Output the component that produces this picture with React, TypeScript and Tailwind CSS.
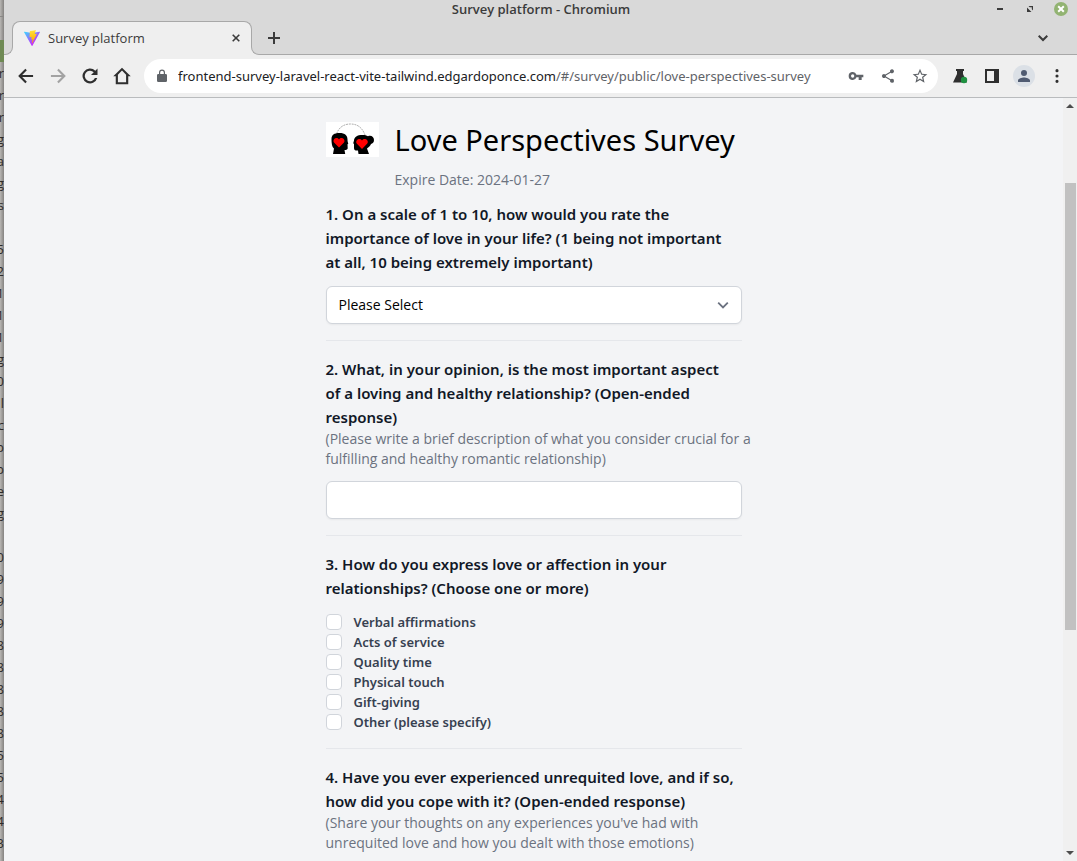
import React from "react";

const sliverRows = [
  "", "r", "r", "r", "g", "a", "g", "s", "", "5", "2", "1", "1", "1", "g", "0", "l", "c", "p",
  "p", "e", "g", "", "0", "9", "9", "9", "8", "8", "8", "8", "8", "5", "5", "4", "4", "3",
];

const expressions = [
  "Verbal affirmations",
  "Acts of service",
  "Quality time",
  "Physical touch",
  "Gift-giving",
  "Other (please specify)",
];

function Lines({ lines }: { lines: string[] }) {
  return (
    <>
      {lines.map((line, i) => (
        <span key={line} className="block whitespace-nowrap">
          {line}
          {i < lines.length - 1 ? " " : ""}
        </span>
      ))}
    </>
  );
}

function BackgroundWindow() {
  return (
    <div aria-hidden="true" className="flex w-1 shrink-0 flex-col overflow-hidden bg-linear-to-r from-[#b9b7b4] to-[#858381] text-[13px] leading-[22px] text-[#2f2b29]">
      <div className="h-[17px] shrink-0 border-b border-[#8a8886]" />
      <div className="h-[23px] shrink-0" />
      {sliverRows.map((row, i) => (
        <div key={i} className={i === 0 ? "h-[22px] shrink-0 bg-[#6f8a54]" : "flex h-[22px] shrink-0 justify-end"}>
          {row}
        </div>
      ))}
    </div>
  );
}

function ViteLogo() {
  return (
    <svg viewBox="0 0 256 257" className="size-4 shrink-0" aria-hidden="true">
      <defs>
        <linearGradient id="viteBody" x1="-.8%" x2="57.6%" y1="7.7%" y2="78.4%">
          <stop offset="0%" stopColor="#41D1FF" />
          <stop offset="100%" stopColor="#BD34FE" />
        </linearGradient>
        <linearGradient id="viteBolt" x1="43.4%" x2="50.3%" y1="2.2%" y2="89%">
          <stop offset="0%" stopColor="#FFEA83" />
          <stop offset="8.3%" stopColor="#FFDD35" />
          <stop offset="100%" stopColor="#FFA800" />
        </linearGradient>
      </defs>
      <path fill="url(#viteBody)" d="M255.153 37.938 134.897 252.976c-2.483 4.44-8.862 4.466-11.382.048L.875 37.958c-2.746-4.814 1.371-10.646 6.827-9.67l120.385 21.517a6.537 6.537 0 0 0 2.322-.004l117.867-21.483c5.438-.991 9.574 4.796 6.877 9.62Z" />
      <path fill="url(#viteBolt)" d="M185.432.063 96.44 17.501a3.268 3.268 0 0 0-2.634 3.014l-5.474 92.456a3.268 3.268 0 0 0 3.997 3.378l24.777-5.718c2.318-.535 4.413 1.507 3.936 3.838l-7.361 36.047c-.495 2.426 1.782 4.5 4.151 3.78l15.304-4.649c2.372-.72 4.652 1.36 4.15 3.788l-11.698 56.621c-.732 3.542 3.979 5.473 5.943 2.437l1.313-2.028 72.516-144.72c1.215-2.423-.88-5.186-3.54-4.672l-25.505 4.922c-2.396.462-4.435-1.77-3.759-4.114l16.646-57.705c.677-2.35-1.37-4.583-3.769-4.113Z" />
    </svg>
  );
}

function Icon({ d, className }: { d: string; className: string }) {
  return (
    <svg viewBox="0 0 24 24" fill="currentColor" className={className} aria-hidden="true">
      <path d={d} />
    </svg>
  );
}

function TitleBar() {
  return (
    <div className="flex h-[21px] items-center bg-[#d9d9d9] pr-[9px] pb-[3px] text-[#3b3b3b]">
      <div className="w-[84px] shrink-0" />
      <div className="flex-1 text-center text-[13px] leading-[18px] font-semibold">Survey platform - Chromium</div>
      <div className="flex shrink-0 items-center gap-4">
        <button aria-label="Minimize" className="flex size-3 items-center justify-center">
          <span className="h-[2px] w-[6px] bg-[#3b3b3b]" />
        </button>
        <button aria-label="Maximize" className="flex size-4 items-center justify-center">
          <svg viewBox="0 0 8 8" className="size-2" fill="currentColor" aria-hidden="true">
            <path d="M2.500 1H7v4.500L5.800 4.300V2.200H3.700zM1 2.500l4.500 4.500H1z" />
          </svg>
        </button>
        <button aria-label="Close" className="flex size-[14px] items-center justify-center rounded-full bg-[#92b372]">
          <svg viewBox="0 0 8 8" className="size-2" stroke="white" strokeWidth="2" aria-hidden="true">
            <path d="M1.200 1.200l5.600 5.600M6.800 1.200L1.200 6.800" />
          </svg>
        </button>
      </div>
    </div>
  );
}

function TabStrip() {
  return (
    <div className="flex h-[34px] items-stretch bg-[#d9d9d9] text-[#3b3b3b]">
      <div className="w-2 shrink-0 border-b border-[#a8a8a8]" />
      <div className="relative flex w-60 items-center rounded-t-lg border border-b-0 border-[#a8a8a8] bg-[#efefef] pr-[7px] pb-[2px] pl-[11px]">
        <span className="absolute bottom-0 -left-[9px] size-[9px] bg-[#efefef]">
          <span className="block size-full rounded-br-lg border-r border-b border-[#a8a8a8] bg-[#d9d9d9]" />
        </span>
        <span className="absolute -right-[9px] bottom-0 size-[9px] bg-[#efefef]">
          <span className="block size-full rounded-bl-lg border-b border-l border-[#a8a8a8] bg-[#d9d9d9]" />
        </span>
        <ViteLogo />
        <span className="ml-2 flex-1 text-[13px] leading-5">Survey platform</span>
        <button aria-label="Close tab" className="flex size-4 items-center justify-center">
          <svg viewBox="0 0 8 8" className="size-2" stroke="currentColor" strokeWidth="1.600" aria-hidden="true">
            <path d="M.7.7l6.600 6.600M7.300.7L.7 7.300" />
          </svg>
        </button>
      </div>
      <div className="flex flex-1 items-center justify-between border-b border-[#a8a8a8] pr-[29px] pl-4">
        <button aria-label="New tab">
          <svg viewBox="0 0 12 12" className="size-3" stroke="currentColor" strokeWidth="2" aria-hidden="true">
            <path d="M6 0v12M0 6h12" />
          </svg>
        </button>
        <button aria-label="Search tabs">
          <svg viewBox="0 0 10 10" className="size-[10px]" fill="none" stroke="currentColor" strokeWidth="2" aria-hidden="true">
            <path d="M.7 2.700L5 7l4.300-4.300" />
          </svg>
        </button>
      </div>
    </div>
  );
}

function Toolbar() {
  return (
    <div className="flex h-[43px] items-center border-b border-[#b9bbbd] bg-[#efefef] pr-[11px] pl-3 text-[#2f2f2f]">
      <div className="flex shrink-0 gap-3">
        <button aria-label="Back"><Icon className="size-5" d="M20.500 10.800v2.400H7.400l5.600 5.700-1.800 1.700L2.600 12l8.600-8.600L13 5.100l-5.600 5.700z" /></button>
        <button aria-label="Forward" className="text-[#a2a2a2]"><Icon className="size-5" d="M3.500 10.800v2.400h13.100L11 18.900l1.800 1.700 8.600-8.600-8.600-8.600L11 5.100l5.600 5.700z" /></button>
        <button aria-label="Reload"><Icon className="size-5" d="M18.400 5.600A9 9 0 1 0 20.700 14.400h-2.800A6.300 6.300 0 1 1 16.500 7.500L13.200 10.800H21V3z" /></button>
        <button aria-label="Home"><Icon className="size-5" d="M12 2L1.500 12.200H4.500V22h15V12.200h3zM12 5.500l4.900 4.900V19.400H7.100V10.400z" /></button>
      </div>
      <div className="ml-3 flex h-[34px] min-w-0 flex-1 items-center rounded-full bg-white pr-3 pl-[10px] text-[#5f6368]">
        <Icon className="size-4 shrink-0" d="M17.500 9h-1V6.900a4.500 4.500 0 0 0-9 0V9h-1a2 2 0 0 0-2 2v8a2 2 0 0 0 2 2h11a2 2 0 0 0 2-2v-8a2 2 0 0 0-2-2zM9.300 6.900a2.700 2.700 0 0 1 5.400 0V9H9.300z" />
        <div className="ml-2 min-w-0 flex-1 overflow-hidden font-['Noto_Sans'] text-[13px] leading-5 whitespace-nowrap">
          <span className="text-[#202124]">frontend-survey-laravel-react-vite-tailwind.edgardoponce.com</span>
          <span>/#/survey/public/love-perspectives-survey</span>
        </div>
        <div className="flex shrink-0 gap-4">
          <button aria-label="Passwords"><Icon className="size-4" d="M12.700 10A6 6 0 0 0 1 12a6 6 0 0 0 11.700 2H16v4h4.500v-4H23v-4zM7 14.500a2.500 2.500 0 1 1 0-5 2.500 2.500 0 0 1 0 5z" /></button>
          <button aria-label="Share"><Icon className="size-4" d="M18 16.100c-.8 0-1.400.3-2 .8l-7.100-4.200a3.300 3.300 0 0 0 0-1.400L16 7.100A3 3 0 1 0 15.100 5.700L8 9.800a3 3 0 1 0 0 4.400l7.100 4.200A3 3 0 1 0 18 16.100z" /></button>
          <button aria-label="Bookmark" className="-mr-[2px]"><Icon className="size-4" d="M23 9.200l-7.900-.7L12 1.200 8.900 8.500 1 9.200l6 5.200L5.200 22.100 12 18l6.800 4.100-1.800-7.700zM12 15.800l-4.100 2.500L9 13.600 5.300 10.500l4.800-.4L12 5.600l1.900 4.500 4.800.4-3.700 3.100 1.100 4.700z" /></button>
        </div>
      </div>
      <div className="ml-[14px] flex shrink-0 items-center">
        <button aria-label="Experiments">
          <svg viewBox="0 0 16 16" className="size-4" aria-hidden="true">
            <path d="M4 1h8v2h-1v3l4 8.500H1L5 6V3H4z" fill="#2f2f2f" />
            <circle cx="12" cy="12" r="3.200" fill="#1e9140" />
          </svg>
        </button>
        <button aria-label="Side panel" className="ml-4">
          <svg viewBox="0 0 16 16" className="size-4" aria-hidden="true">
            <path fillRule="evenodd" d="M1 1h14v14H1zM3 3h7v10H3z" fill="#2f2f2f" />
          </svg>
        </button>
        <button aria-label="Profile" className="ml-[13px] flex size-[22px] items-center justify-center rounded-full bg-[#dbe0e6] text-[#505b71]">
          <Icon className="size-[18px]" d="M12 12a4 4 0 1 0 0-8 4 4 0 0 0 0 8zm0 2c-2.700 0-8 1.300-8 4v2h16v-2c0-2.700-5.300-4-8-4z" />
        </button>
        <button aria-label="Menu" className="ml-[13px]">
          <Icon className="size-[18px]" d="M12 7a2.100 2.100 0 1 0 0-4.200A2.100 2.100 0 0 0 12 7zm0 7.100a2.100 2.100 0 1 0 0-4.200 2.100 2.100 0 0 0 0 4.200zm0 7.100a2.100 2.100 0 1 0 0-4.200 2.100 2.100 0 0 0 0 4.200z" />
        </button>
      </div>
    </div>
  );
}

function SurveyPicture() {
  return (
    <svg viewBox="0 0 53 35" className="h-[35px] w-[53px] shrink-0 bg-white" role="img" aria-label="Two heads with hearts">
      <path d="M10.500 12C13 5 18 2 24.500 2S36 5 39 13" fill="none" stroke="#999" strokeWidth=".8" strokeDasharray="2 .8" />
      <path d="M5.500 17c0-4 2.500-6 8-6 5.500 0 8 2.500 8 6.500 0 1.500.2 2.500.8 4.200l-.8.6.2 3.700c0 1.500-1 2-3.200 2l.7 4H7l1-5.500c-2-1.500-2.500-5.500-2.500-9.500z" />
      <path d="M28 22l-.8-.7.800-2.800c.3-3.500 3-5.500 8.500-5.500 2.500 0 4 .5 5.500 1.300 3-1.300 6 .5 6 3.700 0 2.500-1.500 3.700-3 4-.5 2-2.500 3-4 4.500l2 5.500H32.500l-.5-3.500c-2.500.3-4-.2-4-2.500z" />
      <path d="M13 25.500L8 20.500c-2-3 2.500-6.500 5-3 2.500-3.500 7 0 5 3z" fill="#f00" />
      <path d="M36 27l-5.300-5.500c-2-3 2.700-6.500 5.300-3 2.600-3.500 7.500 0 5.300 3z" fill="#f00" />
    </svg>
  );
}

function Survey() {
  return (
    <form className="w-full max-w-[416px] pt-6">
      <header className="flex items-start gap-4">
        <SurveyPicture />
        <div className="whitespace-nowrap">
          <h1 className="font-['Noto_Sans'] text-[29px] leading-9 text-black">Love Perspectives Survey</h1>
          <p className="mt-3 text-sm text-[#6b7280]">Expire Date: 2024-01-27</p>
        </div>
      </header>

      <section className="mt-3 border-b border-[#e5e7eb] pb-4">
        <label htmlFor="q1" className="block font-['Noto_Sans'] text-[15px] leading-6 font-semibold text-[#111827]">
          <Lines lines={["1. On a scale of 1 to 10, how would you rate the", "importance of love in your life? (1 being not important", "at all, 10 being extremely important)"]} />
        </label>
        <div className="mt-3 grid items-center">
          <select id="q1" className="col-start-1 row-start-1 h-[38px] w-full appearance-none rounded-md border border-[#d1d5db] bg-white px-3 text-sm text-black shadow-xs">
            <option>Please Select</option>
            {Array.from({ length: 10 }, (_, n) => (
              <option key={n}>{n + 1}</option>
            ))}
          </select>
          <svg viewBox="0 0 12 12" className="pointer-events-none col-start-1 row-start-1 mr-[13px] size-3 justify-self-end" fill="none" stroke="#6b7280" strokeWidth="1.800" aria-hidden="true">
            <path d="M1.200 3.700L6 8.500l4.800-4.800" />
          </svg>
        </div>
      </section>

      <section className="mt-4 border-b border-[#e5e7eb] pb-4">
        <label htmlFor="q2" className="block font-['Noto_Sans'] text-[15px] leading-6 font-semibold text-[#111827]">
          <Lines lines={["2. What, in your opinion, is the most important aspect", "of a loving and healthy relationship? (Open-ended", "response)"]} />
        </label>
        <p className="text-sm text-[#6b7280]">
          <Lines lines={["(Please write a brief description of what you consider crucial for a", "fulfilling and healthy romantic relationship)"]} />
        </p>
        <input id="q2" type="text" className="mt-3 block h-[38px] w-full rounded-md border border-[#d1d5db] bg-white px-3 text-sm shadow-xs" />
      </section>

      <fieldset className="mt-4 border-b border-[#e5e7eb] pb-4">
        <legend className="font-['Noto_Sans'] text-[15px] leading-6 font-semibold text-[#111827]">
          <Lines lines={["3. How do you express love or affection in your", "relationships? (Choose one or more)"]} />
        </legend>
        <div className="mt-3">
          {expressions.map((name) => (
            <label key={name} className="flex h-5 items-center gap-3 font-['Noto_Sans'] text-[13px] leading-5 font-semibold text-[#374151]">
              <input type="checkbox" className="size-4 appearance-none rounded-sm border border-[#d1d5db] bg-white checked:bg-[#4f46e5]" />
              {name}
            </label>
          ))}
        </div>
      </fieldset>

      <section className="mt-4 pb-4">
        <label htmlFor="q4" className="block font-['Noto_Sans'] text-[15px] leading-6 font-semibold text-[#111827]">
          <Lines lines={["4. Have you ever experienced unrequited love, and if so,", "how did you cope with it? (Open-ended response)"]} />
        </label>
        <p className="text-sm text-[#6b7280]">
          <Lines lines={["(Share your thoughts on any experiences you've had with", "unrequited love and how you dealt with those emotions)"]} />
        </p>
        <input id="q4" type="text" className="mt-3 block h-[38px] w-full rounded-md border border-[#d1d5db] bg-white px-3 text-sm shadow-xs" />
      </section>
    </form>
  );
}

function ScrollBar() {
  return (
    <div aria-hidden="true" className="flex w-[14px] shrink-0 flex-col items-center bg-[#f0f0f0] py-[6px]">
      <svg viewBox="0 0 8 4" className="h-1 w-2 shrink-0" fill="#4d4d4d"><path d="M4 0l4 4H0z" /></svg>
      <div className="flex-[75]" />
      <div className="w-[11px] flex-[447] bg-[#c1c1c1]" />
      <div className="flex-[221]" />
      <svg viewBox="0 0 8 4" className="h-1 w-2 shrink-0" fill="#4d4d4d"><path d="M4 4l4-4H0z" /></svg>
    </div>
  );
}

export default function App() {
  return (
    <div className="flex h-screen overflow-hidden font-['Open_Sans',sans-serif]">
      <BackgroundWindow />
      <div className="flex min-w-0 flex-1 flex-col">
        <TitleBar />
        <TabStrip />
        <Toolbar />
        <div className="flex min-h-0 flex-1 bg-[#f3f4f6]">
          <main className="flex min-w-0 flex-1 justify-center overflow-hidden">
            <Survey />
          </main>
          <ScrollBar />
        </div>
      </div>
    </div>
  );
}
